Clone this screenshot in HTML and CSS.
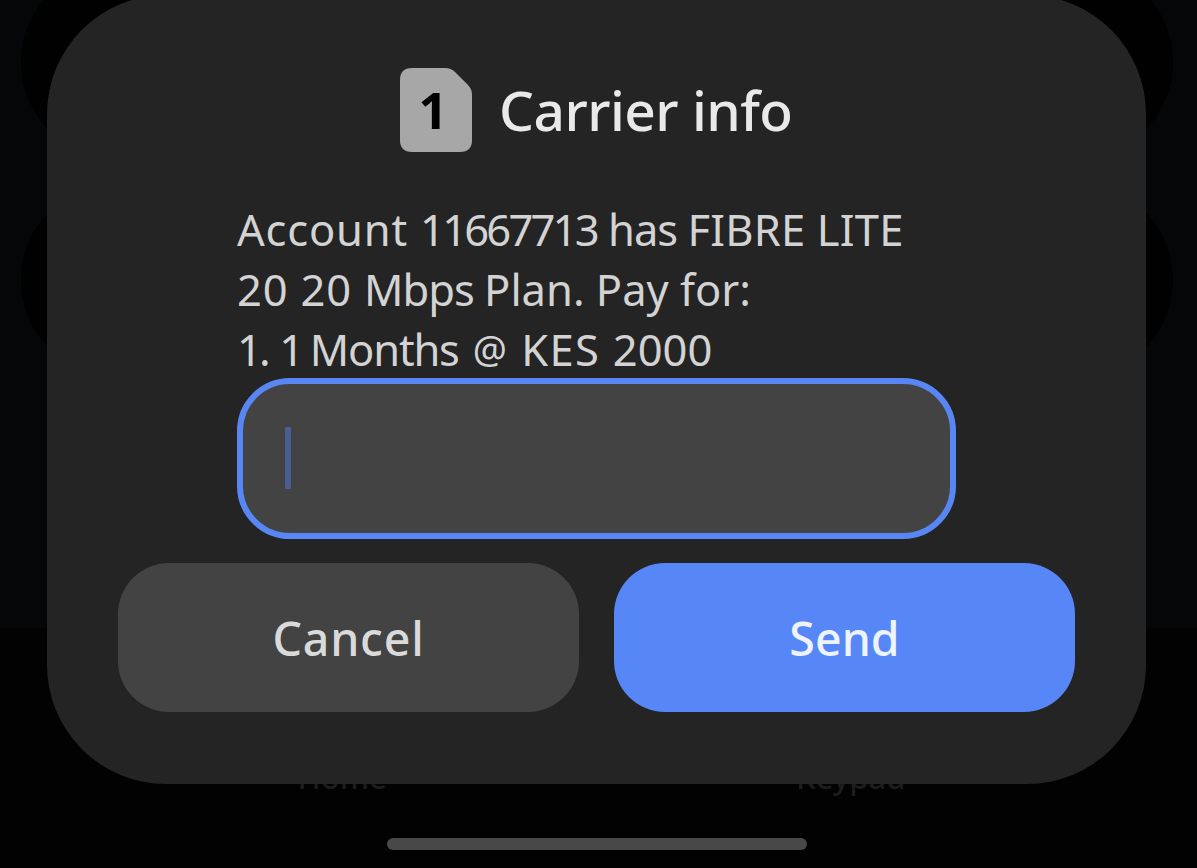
FILE: index.html
```
<!DOCTYPE html>
<html lang="en">
<head>
  <meta charset="UTF-8" />
  <meta name="viewport" content="width=device-width, initial-scale=1.0" />
  <title>Carrier info</title>
  <link rel="stylesheet" href="styles.css">
</head>
<body>
  <main class="screen">
    <div class="cards">
      <div class="card"></div>
      <div class="card"></div>
    </div>
    <nav class="tabs">
      <span class="tab">Home</span>
      <span class="tab">Keypad</span>
    </nav>
    <div class="home-bar"></div>
  </main>

  <section class="dialog">
    <header>
      <svg class="sim" viewBox="0 0 72 84" width="72" height="84">
        <path d="M12 0H45Q51 0 55 4L68 17Q72 21 72 27V72Q72 84 60 84H12Q0 84 0 72V12Q0 0 12 0Z" fill="#a7a7a7" />
        <text x="33" y="61" text-anchor="middle">1</text>
      </svg>
      <h1>Carrier info</h1>
    </header>
    <p class="message">
      <span class="line"><span class="wide">Account </span><span class="number">11667713</span> <span class="tight">has </span><span class="caps">FIBRE LITE</span></span>
      <span class="line"><span class="wide">20 20 </span><span class="tight">Mbps </span>Plan. Pay for:</span>
      <span class="line"><span class="number">1.</span> <span class="number">1 </span><span class="months">Months </span><span class="at">@</span> <span class="kes">KES </span>2000</span>
    </p>
    <div class="field"><span class="cursor"></span></div>
    <div class="actions">
      <button class="cancel">Cancel</button>
      <button class="send">Send</button>
    </div>
  </section>
</body>
</html>
```
FILE: styles.css
```
body {
  margin: 0;
  height: 868px;
  overflow: hidden;
  position: relative;
  background: #020202;
  font-family: "Noto Sans", sans-serif;
}
.screen {
  height: 868px;
  display: flex;
  flex-direction: column;
  overflow: hidden;
}
.cards {
  box-sizing: border-box;
  height: 628px;
  padding: 0 24px 0 21px;
  background: #040608;
  display: flex;
  flex-direction: column;
  gap: 24px;
}
.card {
  height: 194px;
  flex: none;
  border-radius: 97px;
  background: #010101;
}
.card:first-child {
  margin-top: -35px;
}
.tabs {
  height: 210px;
  display: grid;
  grid-template-columns: 1fr 1fr;
  padding: 0 92px 0 88px;
  box-sizing: border-box;
  text-align: center;
  font-size: 31px;
  font-weight: 500;
  line-height: 40px;
  color: #1d1d1d;
}
.tab {
  padding-top: 129px;
}
.home-bar {
  width: 420px;
  height: 12px;
  margin-left: 387px;
  border-radius: 6px;
  background: #484848;
}
/* dialog over the dimmed screen */
.dialog {
  position: absolute;
  top: -5px;
  left: 47px;
  width: 1099px;
  height: 789px;
  box-sizing: border-box;
  padding: 73px 71px 72px;
  border-radius: 119px;
  background: #242424;
}
header {
  display: flex;
  align-items: center;
  height: 84px;
  padding-left: 282px;
  gap: 27px;
}
.sim {
  flex: none;
}
.sim text {
  font-size: 51px;
  font-weight: 700;
  fill: #000;
}
h1 {
  margin: 0;
  font-size: 55px;
  font-weight: 500;
  line-height: 84px;
  letter-spacing: -0.5px;
  white-space: nowrap;
  color: #e9e9e9;
}
.message {
  margin: 47px 0 0 119px;
  height: 179px;
  font-size: 43.5px;
  line-height: 60px;
  color: #d3d3d3;
}
.line {
  display: block;
  white-space: nowrap;
}
.wide {
  letter-spacing: 0.8px;
}
.number {
  letter-spacing: -2.8px;
}
.tight {
  letter-spacing: -1px;
}
.months {
  letter-spacing: -1.2px;
}
.caps {
  letter-spacing: 0.2px;
}
.at {
  margin: 0 3px 0 4px;
  font-size: 38px;
  line-height: 1;
  vertical-align: 3px;
}
.kes {
  letter-spacing: 1.3px;
}
.field {
  box-sizing: border-box;
  width: 719px;
  height: 161px;
  margin-left: 119px;
  padding: 43px 42px;
  border: 6px solid #5887f5;
  border-radius: 53px;
  background: #434343;
}
.cursor {
  display: block;
  width: 6px;
  height: 62px;
  background: #495f93;
}
.actions {
  display: grid;
  grid-template-columns: 461px 461px;
  gap: 35px;
  margin-top: 24px;
}
button {
  height: 149px;
  padding: 0;
  border: 0;
  border-radius: 51px;
  font-family: inherit;
  font-size: 46.5px;
  font-weight: 500;
}
.cancel {
  background: #434343;
  color: #dadada;
  letter-spacing: 0.8px;
}
.send {
  background: #5787f6;
  color: #edf3ff;
}
```
